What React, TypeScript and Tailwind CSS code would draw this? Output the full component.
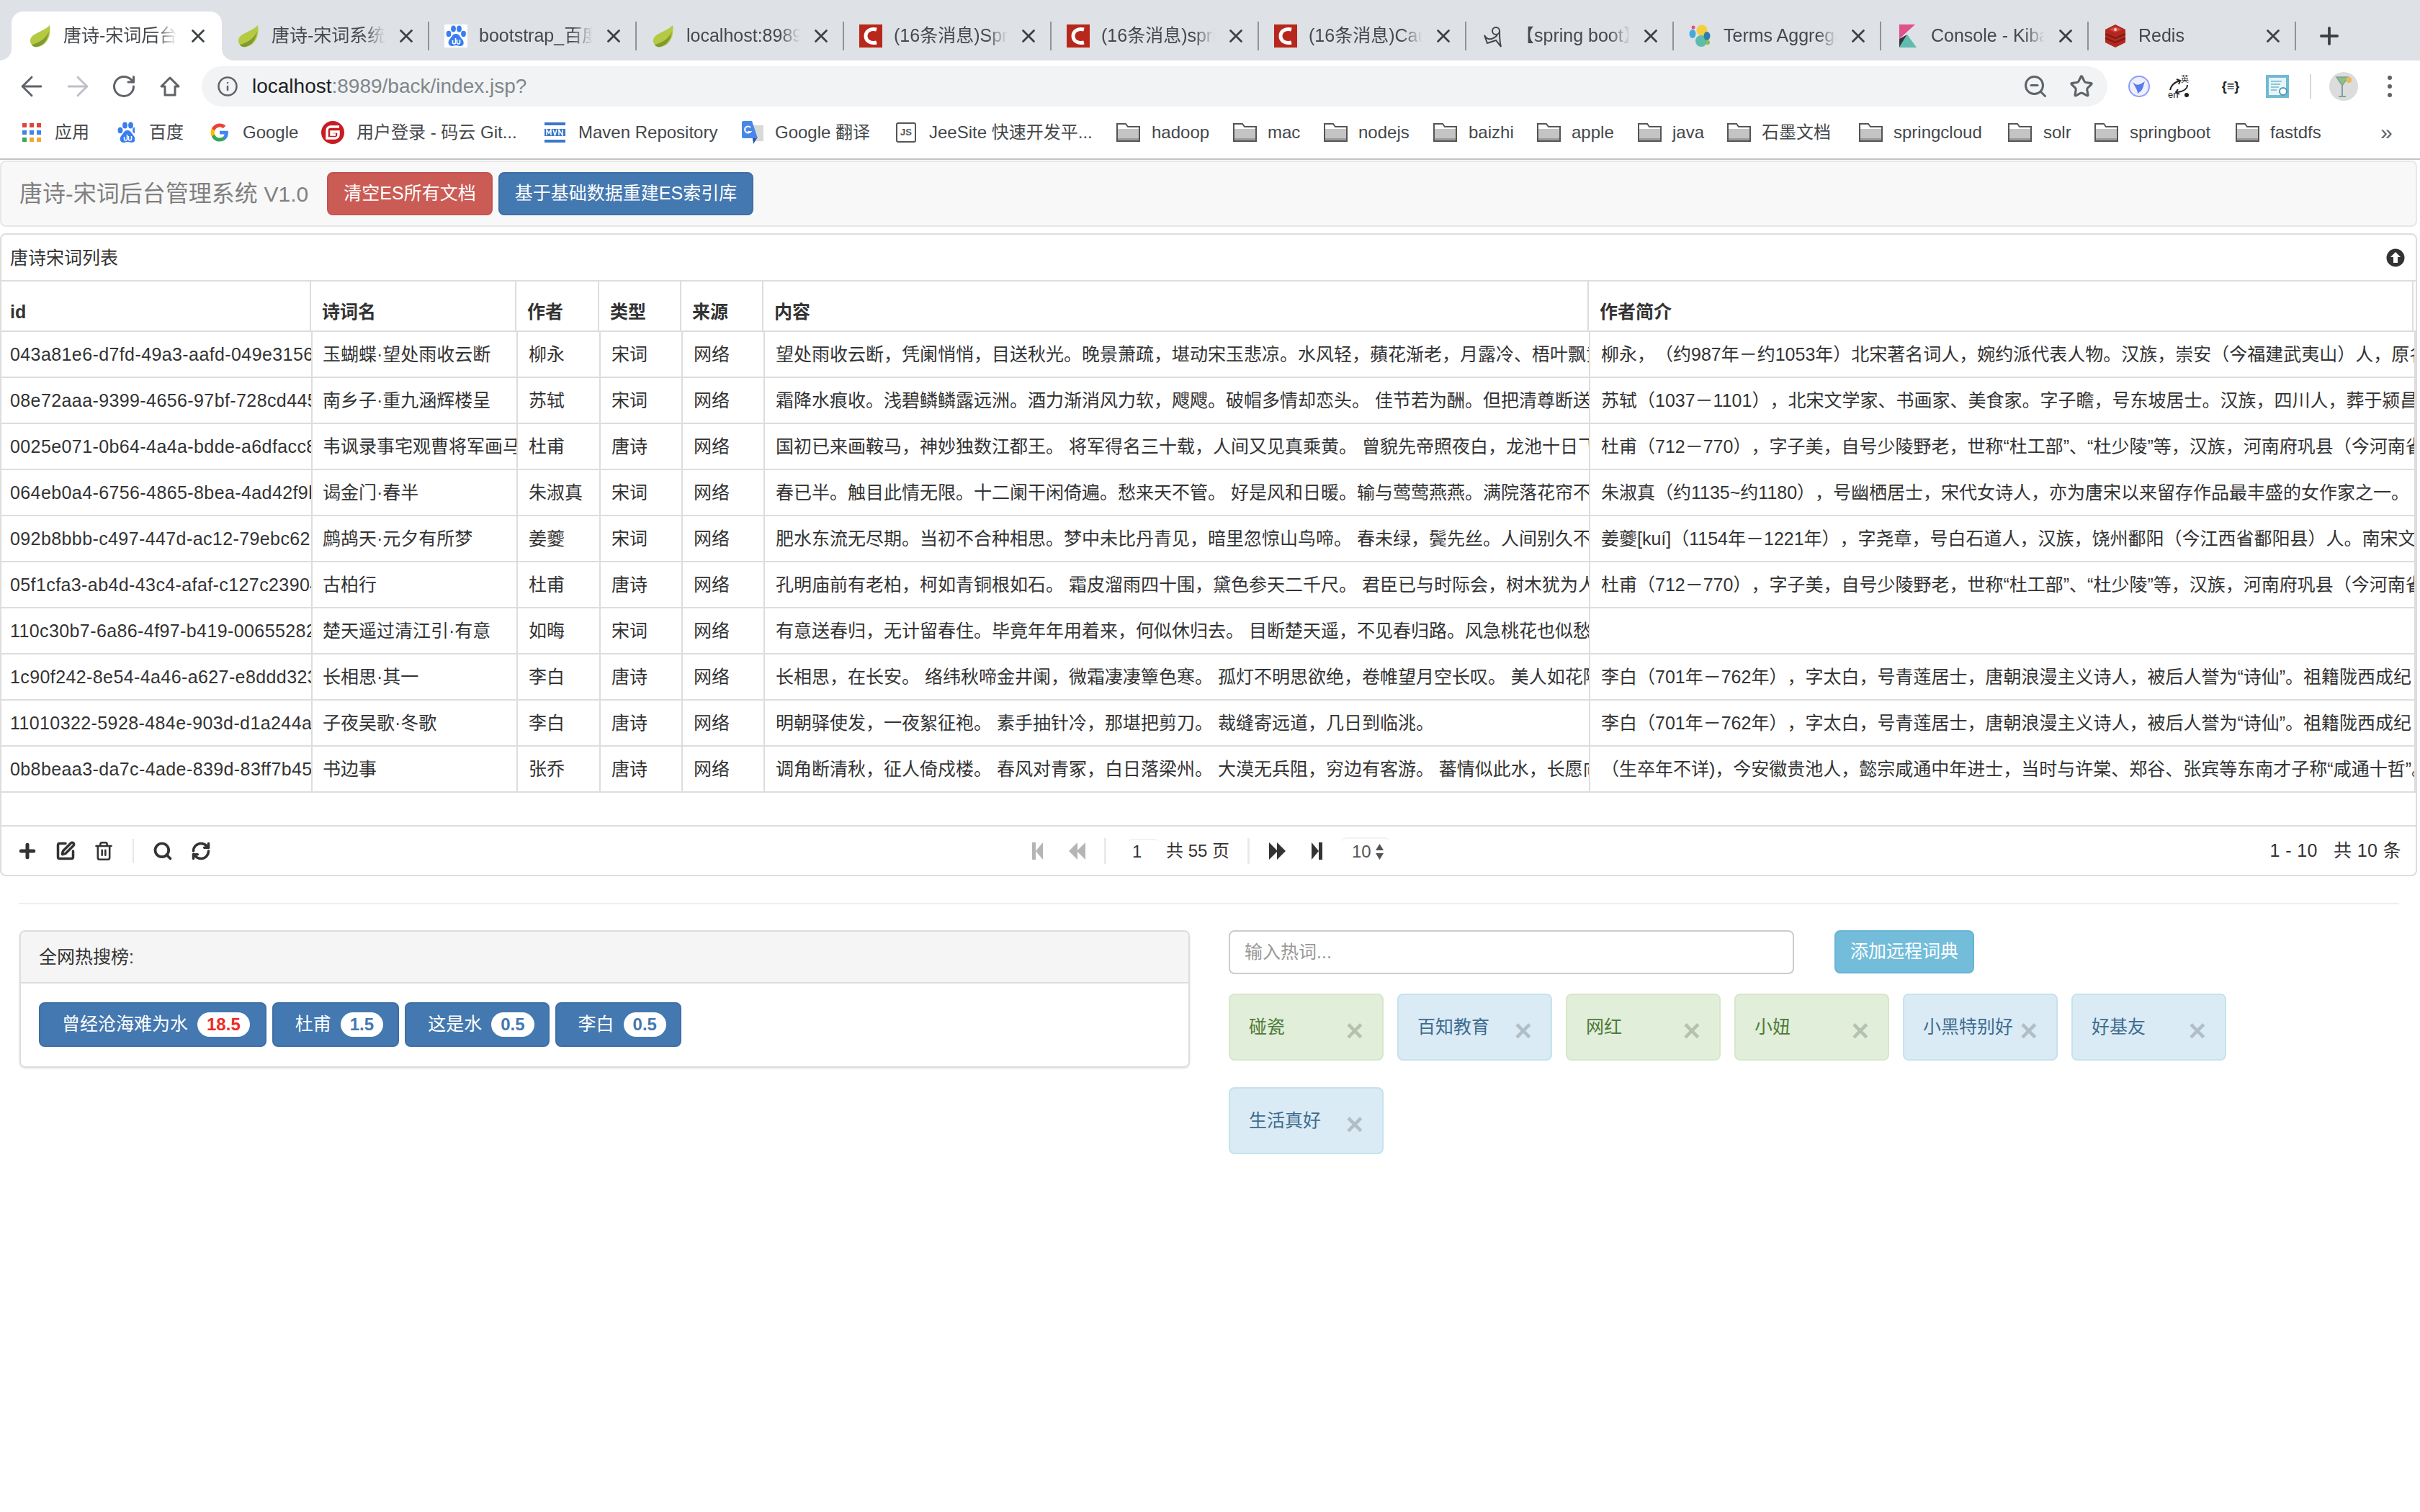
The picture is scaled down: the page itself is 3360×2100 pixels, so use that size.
import React from 'react'
import { ArrowLeft, ArrowRight, RotateCw, Info, ZoomOut, Star, X, Plus, SquarePen, Trash2, Search, RefreshCw } from 'lucide-react'

const Leaf = () => (
  <svg width="32" height="32" viewBox="0 0 32 32">
    <path d="M29 1C31 14 27 28 13 31C6 32 3 28 2 24C1 12 18 12 29 1Z" fill="#b5c943" />
    <path d="M4 28C12 26 22 22 28 10C26 22 20 29 12 31C8 32 5 30 4 28Z" fill="#7f9a2e" />
  </svg>
)

const Paw = ({ bg = true }: { bg?: boolean }) => (
  <svg width="32" height="32" viewBox="0 0 32 32">
    {bg && <rect width="32" height="32" fill="#fff" />}
    <ellipse cx="6" cy="13" rx="3.4" ry="4.2" fill="#3a7df0" />
    <ellipse cx="12.5" cy="6" rx="3.4" ry="4.6" fill="#3a7df0" />
    <ellipse cx="20.5" cy="6" rx="3.4" ry="4.6" fill="#3a7df0" />
    <ellipse cx="26.5" cy="13" rx="3.4" ry="4.2" fill="#3a7df0" />
    <path d="M16 13C11 13 10 18 7 21C4 25 6 30 11 30C13 30 14 29 16 29C18 29 20 30 22 30C27 30 28 25 25 21C22 18 21 13 16 13Z" fill="#3a7df0" />
    <path d="M11.5 22v3a2 2 0 0 0 4 0v-6M17.5 21v4a2 2 0 0 0 4 0v-4" fill="none" stroke="#fff" strokeWidth="1.6" />
  </svg>
)

const Csdn = () => (
  <svg width="32" height="32" viewBox="0 0 32 32">
    <rect width="32" height="32" fill="#b8271b" />
    <path d="M24 7C16 5 9 9 9 16C9 23 16 27 24 25" fill="none" stroke="#fff" strokeWidth="5" />
  </svg>
)

const Spiral = () => (
  <svg width="32" height="32" viewBox="0 0 32 32" fill="none" stroke="#444" strokeWidth="2">
    <circle cx="20" cy="9" r="5" />
    <path d="M25 9C25 16 25 24 27 31L20 22L8 26L4 15C8 22 14 22 22 15" />
  </svg>
)

const Elastic = () => (
  <svg width="32" height="32" viewBox="0 0 32 32">
    <circle cx="18" cy="8" r="7.5" fill="#f4ce3d" />
    <circle cx="17" cy="23" r="8" fill="#5cbcae" />
    <ellipse cx="5" cy="13" rx="4.5" ry="6" fill="#45a9dc" />
    <ellipse cx="25" cy="16" rx="4.5" ry="6" fill="#2e7fa8" />
    <circle cx="6" cy="4" r="2.5" fill="#e0508a" />
    <circle cx="26" cy="25" r="3" fill="#95bb3e" />
  </svg>
)

const Kibana = () => (
  <svg width="32" height="32" viewBox="0 0 32 32">
    <path d="M4 0H26L4 20Z" fill="#e0508a" />
    <path d="M4 20L15 14L4 32Z" fill="#343741" />
    <path d="M15 14L28 32H4Z" fill="#5fbcae" />
  </svg>
)

const Redis = () => (
  <svg width="32" height="32" viewBox="0 0 32 32">
    <path d="M16 0L30 7V25L16 32L2 25V7Z" fill="#b2281f" />
    <path d="M2 13L16 19L30 13M2 19L16 25L30 19" fill="none" stroke="#7d1a14" strokeWidth="2" />
    <path d="M16 3L25 7L16 11L7 7Z" fill="#d84a3c" />
    <circle cx="16" cy="7" r="2" fill="#f3d3cf" />
  </svg>
)

const tabs = [
  { title: '唐诗-宋词后台管理系统', icon: <Leaf /> },
  { title: '唐诗-宋词系统', icon: <Leaf /> },
  { title: 'bootstrap_百度搜索', icon: <Paw /> },
  { title: 'localhost:8989', icon: <Leaf /> },
  { title: '(16条消息)Spring Boot', icon: <Csdn /> },
  { title: '(16条消息)spring boot', icon: <Csdn /> },
  { title: '(16条消息)Caused by', icon: <Csdn /> },
  { title: '【spring boot】', icon: <Spiral /> },
  { title: 'Terms Aggregation', icon: <Elastic /> },
  { title: 'Console - Kibana', icon: <Kibana /> },
  { title: 'Redis', icon: <Redis /> },
]

const Folder = () => (
  <svg width="33" height="26" viewBox="0 0 33 26">
    <path d="M1 25V1H13L16 5H32V25Z" fill="#fff" stroke="#555" strokeWidth="2" />
    <rect x="2" y="8" width="29" height="13" fill="#c4c4c4" />
    <rect x="2" y="21" width="29" height="3" fill="#9c9c9c" />
  </svg>
)

const Apps = () => (
  <svg width="26" height="26" viewBox="0 0 26 26">
    <rect x="0" y="0" width="6" height="6" fill="#e0443a" />
    <rect x="10" y="0" width="6" height="6" fill="#e0443a" />
    <rect x="20" y="0" width="6" height="6" fill="#e0443a" />
    <rect x="0" y="10" width="6" height="6" fill="#3d84ee" />
    <rect x="10" y="10" width="6" height="6" fill="#3d84ee" />
    <rect x="20" y="10" width="6" height="6" fill="#3d84ee" />
    <rect x="0" y="20" width="6" height="6" fill="#3fa654" />
    <rect x="10" y="20" width="6" height="6" fill="#efa92f" />
    <rect x="20" y="20" width="6" height="6" fill="#efa92f" />
  </svg>
)

const GoogleG = () => (
  <svg width="26" height="28" viewBox="0 0 24 24">
    <path d="M23 12.3c0-.8-.1-1.6-.2-2.3H12v4.4h6.2a5.300 5.300 0 0 1-2.300 3.500v2.900h3.700c2.200-2 3.400-5 3.400-8.500z" fill="#4285f4" />
    <path d="M12 23.500c3.100 0 5.700-1 7.600-2.800l-3.700-2.900c-1 .7-2.300 1.100-3.900 1.100-3 0-5.500-2-6.400-4.700H1.800v3A11.500 11.500 0 0 0 12 23.500z" fill="#34a853" />
    <path d="M5.600 14.200a6.900 6.900 0 0 1 0-4.400v-3H1.800a11.500 11.500 0 0 0 0 10.400z" fill="#fbbc05" />
    <path d="M12 5.100c1.700 0 3.200.6 4.400 1.700l3.300-3.300A11.500 11.500 0 0 0 1.800 6.800l3.800 3c.9-2.700 3.400-4.700 6.400-4.700z" fill="#ea4335" />
  </svg>
)

const Gitee = () => (
  <svg width="32" height="32" viewBox="0 0 32 32">
    <circle cx="16" cy="16" r="16" fill="#c71d23" />
    <path d="M25 8H13A5 5 0 0 0 8 13V24H19A5 5 0 0 0 24 19V15H14V19H20" fill="none" stroke="#fff" strokeWidth="3.500" />
  </svg>
)

const Maven = () => (
  <svg width="29" height="28" viewBox="0 0 29 28">
    <rect width="29" height="4" y="0" fill="#3a78c9" />
    <rect width="29" height="4" y="24" fill="#3a78c9" />
    <rect width="29" height="10" y="9" fill="#3a78c9" />
    <path d="M3 18V10L6 15L9 10V18M12 10L14.500 18L17 10M20 18V10L25 18V10" fill="none" stroke="#fff" strokeWidth="1.500" />
  </svg>
)

const Translate = () => (
  <svg width="30" height="32" viewBox="0 0 30 32">
    <path d="M12 6H30V28H15Z" fill="#d9d9d9" />
    <path d="M0 2C0 1 1 0 2 0H14L22 24H2C1 24 0 23 0 22Z" fill="#4a86e8" />
    <path d="M15 24H21L16 32Z" fill="#2a56a8" />
    <path d="M14 9A4.500 4.500 0 1 0 14 15H10" fill="none" stroke="#fff" strokeWidth="2" transform="translate(-2 0)" />
  </svg>
)

const JsBox = () => (
  <div className="flex h-[28px] w-[28px] items-center justify-center rounded-[3px] border-2 border-[#555] text-[13px] font-bold leading-none text-[#555]">JS</div>
)

const bookmarks = [
  { label: '应用', icon: <Apps />, width: 'w-[130px]', box: 'w-[45px]' },
  { label: '百度', icon: <div className="h-[32px] w-[26px] overflow-hidden"><Paw bg={false} /></div>, width: 'w-[131px]', box: 'w-[46px]' },
  { label: 'Google', icon: <GoogleG />, width: 'w-[154px]', box: 'w-[45px]' },
  { label: '用户登录 - 码云 Git...', icon: <Gitee />, width: 'w-[310px]', box: 'w-[49px]' },
  { label: 'Maven Repository', icon: <Maven />, width: 'w-[274px]', box: 'w-[47px]' },
  { label: 'Google 翻译', icon: <Translate />, width: 'w-[214px]', box: 'w-[46px]' },
  { label: 'JeeSite 快速开发平...', icon: <JsBox />, width: 'w-[306px]', box: 'w-[46px]' },
  { label: 'hadoop', icon: <Folder />, width: 'w-[162px]', box: 'w-[49px]' },
  { label: 'mac', icon: <Folder />, width: 'w-[126px]', box: 'w-[48px]' },
  { label: 'nodejs', icon: <Folder />, width: 'w-[152px]', box: 'w-[48px]' },
  { label: 'baizhi', icon: <Folder />, width: 'w-[144px]', box: 'w-[49px]' },
  { label: 'apple', icon: <Folder />, width: 'w-[140px]', box: 'w-[48px]' },
  { label: 'java', icon: <Folder />, width: 'w-[124px]', box: 'w-[48px]' },
  { label: '石墨文档', icon: <Folder />, width: 'w-[183px]', box: 'w-[48px]' },
  { label: 'springcloud', icon: <Folder />, width: 'w-[207px]', box: 'w-[48px]' },
  { label: 'solr', icon: <Folder />, width: 'w-[120px]', box: 'w-[49px]' },
  { label: 'springboot', icon: <Folder />, width: 'w-[196px]', box: 'w-[49px]' },
  { label: 'fastdfs', icon: <Folder />, width: 'w-[201px]', box: 'w-[48px]' },
]

const duFu = '杜甫（712－770），字子美，自号少陵野老，世称“杜工部”、“杜少陵”等，汉族，河南府巩县（今河南省巩义市）人'
const liBai = '李白（701年－762年），字太白，号青莲居士，唐朝浪漫主义诗人，被后人誉为“诗仙”。祖籍陇西成纪'

const rows = [
  ['043a81e6-d7fd-49a3-aafd-049e31560a1b', '玉蝴蝶·望处雨收云断', '柳永', '宋词', '望处雨收云断，凭阑悄悄，目送秋光。晚景萧疏，堪动宋玉悲凉。水风轻，蘋花渐老，月露冷、梧叶飘黄。', '柳永，（约987年－约1053年）北宋著名词人，婉约派代表人物。汉族，崇安（今福建武夷山）人，原名三变'],
  ['08e72aaa-9399-4656-97bf-728cd4453c21', '南乡子·重九涵辉楼呈', '苏轼', '宋词', '霜降水痕收。浅碧鳞鳞露远洲。酒力渐消风力软，飕飕。破帽多情却恋头。 佳节若为酬。但把清尊断送秋。', '苏轼（1037－1101），北宋文学家、书画家、美食家。字子瞻，号东坡居士。汉族，四川人，葬于颍昌。'],
  ['0025e071-0b64-4a4a-bdde-a6dfacc80e11', '韦讽录事宅观曹将军画马图', '杜甫', '唐诗', '国初已来画鞍马，神妙独数江都王。 将军得名三十载，人间又见真乘黄。 曾貌先帝照夜白，龙池十日飞霹雳。', duFu],
  ['064eb0a4-6756-4865-8bea-4ad42f9b07d2', '谒金门·春半', '朱淑真', '宋词', '春已半。触目此情无限。十二阑干闲倚遍。愁来天不管。 好是风和日暖。输与莺莺燕燕。满院落花帘不卷。', '朱淑真（约1135~约1180），号幽栖居士，宋代女诗人，亦为唐宋以来留存作品最丰盛的女作家之一。'],
  ['092b8bbb-c497-447d-ac12-79ebc6215f30', '鹧鸪天·元夕有所梦', '姜夔', '宋词', '肥水东流无尽期。当初不合种相思。梦中未比丹青见，暗里忽惊山鸟啼。 春未绿，鬓先丝。人间别久不成悲。', '姜夔[kuí]（1154年－1221年），字尧章，号白石道人，汉族，饶州鄱阳（今江西省鄱阳县）人。南宋文学家'],
  ['05f1cfa3-ab4d-43c4-afaf-c127c23904e8', '古柏行', '杜甫', '唐诗', '孔明庙前有老柏，柯如青铜根如石。 霜皮溜雨四十围，黛色参天二千尺。 君臣已与时际会，树木犹为人爱惜。', duFu],
  ['110c30b7-6a86-4f97-b419-00655282d6a4', '楚天遥过清江引·有意', '如晦', '宋词', '有意送春归，无计留春住。毕竟年年用着来，何似休归去。 目断楚天遥，不见春归路。风急桃花也似愁，', ''],
  ['1c90f242-8e54-4a46-a627-e8ddd3231b97', '长相思·其一', '李白', '唐诗', '长相思，在长安。 络纬秋啼金井阑，微霜凄凄簟色寒。 孤灯不明思欲绝，卷帷望月空长叹。 美人如花隔云端。', liBai],
  ['11010322-5928-484e-903d-d1a244a6c7f0', '子夜吴歌·冬歌', '李白', '唐诗', '明朝驿使发，一夜絮征袍。 素手抽针冷，那堪把剪刀。 裁缝寄远道，几日到临洮。', liBai],
  ['0b8beaa3-da7c-4ade-839d-83ff7b4592ce', '书边事', '张乔', '唐诗', '调角断清秋，征人倚戍楼。 春风对青冢，白日落梁州。 大漠无兵阻，穷边有客游。 蕃情似此水，长愿向南流。', '（生卒年不详)，今安徽贵池人，懿宗咸通中年进士，当时与许棠、郑谷、张宾等东南才子称“咸通十哲”。'],
]

const headers = ['id', '诗词名', '作者', '类型', '来源', '内容', '作者简介']

const hot = [
  { label: '曾经沧海难为水', score: '18.5', color: 'text-[#ee2a1e]', pad: 'pr-[21px]' },
  { label: '杜甫', score: '1.5', color: 'text-[#4478b0]', pad: 'pr-[20px]' },
  { label: '这是水', score: '0.5', color: 'text-[#4478b0]', pad: 'pr-[19px]' },
  { label: '李白', score: '0.5', color: 'text-[#4478b0]', pad: 'pr-[19px]' },
]

const tags = [
  { label: '碰瓷', green: true },
  { label: '百知教育', green: false },
  { label: '网红', green: true },
  { label: '小妞', green: true },
  { label: '小黑特别好', green: false },
  { label: '好基友', green: false },
  { label: '生活真好', green: false },
]

export default function App() {
  return (
    <div className="min-h-screen w-[3360px] overflow-hidden bg-white font-['Liberation_Sans','Noto_Sans_CJK_SC',sans-serif] text-[25px] text-[#333] [text-spacing-trim:space-all]">
      {/* 浏览器标签栏 */}
      <div className="flex h-[84px] items-end bg-[#dee1e6] pl-[16px]">
        {tabs.map((tab, i) => (
          <div
            key={tab.title}
            className={`relative flex h-[68px] items-center text-[25px] text-[#45484c] ${i === 0 ? 'w-[292px] rounded-t-[16px] bg-white pl-[24px]' : 'w-[288px] pl-[21px]'}`}
          >
            {i === 0 && (
              <>
                <span className="absolute bottom-0 left-[-16px] h-[16px] w-[16px] bg-[radial-gradient(circle_at_0_0,#dee1e6_15.500px,white_16px)]" />
                <span className="absolute bottom-0 right-[-16px] h-[16px] w-[16px] bg-[radial-gradient(circle_at_100%_0,#dee1e6_15.500px,white_16px)]" />
              </>
            )}
            <div className="w-[48px] shrink-0">{tab.icon}</div>
            <div className="w-[158px] shrink-0 overflow-hidden whitespace-nowrap [mask-image:linear-gradient(to_right,black_82%,transparent)]">{tab.title}</div>
            <div className="ml-[14px] flex w-[30px] shrink-0 justify-center">
              <X size={30} strokeWidth={2.2} className="text-[#3c4043]" />
            </div>
            {i > 0 && <div className="ml-auto h-[40px] w-[2px] bg-[#8f9398]" />}
          </div>
        ))}
        <div className="ml-[27px] flex h-[68px] items-center">
          <Plus size={38} strokeWidth={2.4} className="text-[#3c4043]" />
        </div>
      </div>

      {/* 地址栏 */}
      <div className="flex h-[72px] items-center pl-[12px]">
        <div className="flex w-[64px] justify-center"><ArrowLeft size={44} strokeWidth={1.6} className="text-[#5f6368]" /></div>
        <div className="flex w-[64px] justify-center"><ArrowRight size={44} strokeWidth={1.6} className="text-[#bdc1c6]" /></div>
        <div className="flex w-[64px] justify-center"><RotateCw size={36} strokeWidth={2} className="text-[#5f6368]" /></div>
        <div className="flex w-[64px] justify-center">
          <svg width="30" height="30" viewBox="0 0 30 30" fill="none" stroke="#5f6368" strokeWidth="3">
            <path d="M15 3L3 15H8V27H22V15H27Z" strokeLinejoin="round" />
          </svg>
        </div>
        <div className="ml-[12px] flex h-[56px] w-[2646px] items-center rounded-full bg-[#f1f3f4] pl-[21px] pr-[4px]">
          <Info size={30} strokeWidth={2} className="text-[#5f6368]" />
          <div className="ml-[19px] text-[28px] text-[#80868b]"><span className="text-[#202124]">localhost</span>:8989/back/index.jsp?</div>
          <div className="ml-auto flex w-[64px] justify-center"><ZoomOut size={36} strokeWidth={2} className="text-[#5f6368]" /></div>
          <div className="flex w-[64px] justify-center"><Star size={34} strokeWidth={2.2} className="text-[#5f6368]" /></div>
        </div>
        <div className="ml-[16px] flex w-[56px] justify-center">
          <svg width="30" height="30" viewBox="0 0 30 30">
            <circle cx="15" cy="15" r="14" fill="#eef0ff" stroke="#8f9cf5" strokeWidth="2" />
            <path d="M6 9C11 14 15 14 23 8C21 13 21 17 18 21L13 25C13 20 9 15 6 9Z" fill="#5a7bea" />
          </svg>
        </div>
        <div className="flex w-[56px] justify-center">
          <svg width="32" height="32" viewBox="0 0 32 32" fill="none" stroke="#222" strokeWidth="2">
            <path d="M3 21C4 15 8 11 16 8M12 6L17 8L15 13M27 14C27 19 22 23 13 24M16 27L11 24L14 20" />
            <text x="18" y="10" fontSize="11" fill="#222" stroke="none">英</text>
            <text x="0" y="32" fontSize="13" fill="#222" stroke="none">en</text>
            <circle cx="26" cy="28" r="3" fill="#222" stroke="none" />
          </svg>
        </div>
        <div className="ml-[15px] flex w-[56px] justify-center text-[18px] font-bold leading-none text-[#222]">{'{≡}'}</div>
        <div className="ml-[9px] flex w-[56px] justify-center">
          <svg width="32" height="32" viewBox="0 0 32 32">
            <rect width="32" height="32" fill="#6fbcd1" />
            <rect x="4" y="4" width="24" height="24" fill="#e8f3f7" />
            <path d="M7 9H22M7 13H20M7 17H18M7 21H15" stroke="#6fbcd1" strokeWidth="1.500" />
            <circle cx="24" cy="23" r="5" fill="#fff" stroke="#4d9ab2" strokeWidth="2" />
          </svg>
        </div>
        <div className="ml-[17px] h-[34px] w-[2px] bg-[#d5d7da]" />
        <div className="ml-[25px] flex h-[40px] w-[40px] items-center justify-center rounded-full bg-[#dcdcdc]">
          <svg width="24" height="34" viewBox="0 0 24 34" fill="none">
            <path d="M2 4H18L10 16Z" fill="#8fbf7a" stroke="#7da0a8" strokeWidth="1.500" />
            <path d="M10 16V30M5 31H15" stroke="#7da0a8" strokeWidth="2" />
            <circle cx="19" cy="8" r="4" fill="#e8b85a" />
          </svg>
        </div>
        <div className="ml-[30px] flex w-[28px] flex-col items-center gap-[6px]">
          <span className="h-[6px] w-[6px] rounded-full bg-[#5f6368]" />
          <span className="h-[6px] w-[6px] rounded-full bg-[#5f6368]" />
          <span className="h-[6px] w-[6px] rounded-full bg-[#5f6368]" />
        </div>
      </div>

      {/* 书签栏 */}
      <div className="flex h-[66px] items-center border-b-2 border-[#c4c4c4] pb-[9px] pl-[31px] text-[24px] text-[#45484c]">
        {bookmarks.map(b => (
          <div key={b.label} className={`flex shrink-0 items-center ${b.width}`}>
            <div className={`shrink-0 ${b.box}`}>{b.icon}</div>
            <span className="whitespace-nowrap">{b.label}</span>
          </div>
        ))}
        <span className="text-[30px] leading-none text-[#5f6368]">»</span>
      </div>

      {/* 导航条 */}
      <div className="mr-[4px] mt-[1px] flex h-[92px] items-center rounded-lg border-2 border-[#e7e7e7] bg-[#f8f8f8] pl-[25px]">
        <div className="w-[402px] whitespace-nowrap text-[32px] text-[#808080]">唐诗-宋词后台管理系统 <span className="text-[30px]">V1.0</span></div>
        <button className="ml-[25px] h-[60px] w-[230px] rounded-lg border-2 border-[#c4534c] bg-[#cb5c55] text-white">清空ES所有文档</button>
        <button className="ml-[8px] h-[60px] w-[354px] rounded-lg border-2 border-[#3f6fa5] bg-[#4478b0] text-white">基于基础数据重建ES索引库</button>
      </div>

      {/* 列表面板 */}
      <div className="mr-[4px] mt-[9px] rounded-lg border-2 border-[#ddd]">
        <div className="flex h-[65px] items-center justify-between border-b-2 border-[#ddd] pl-[12px] pr-[15px]">
          <span className="pt-[2px]">唐诗宋词列表</span>
          <svg width="26" height="26" viewBox="0 0 26 26">
            <circle cx="13" cy="13" r="12.500" fill="#333" />
            <path d="M13 5L20 12H16V20H10V12H6Z" fill="#fff" />
          </svg>
        </div>
        <div className="grid h-[70px] grid-cols-[430px_285px_115px_114px_114px_1146px_1145px] border-b-2 border-[#ddd] font-bold">
          {headers.map((h, i) => (
            <div key={h} className={`flex items-center border-r-2 border-[#ddd] pt-[18px] ${i === 0 ? 'pl-[12px]' : 'pl-[15px]'}`}>{h}</div>
          ))}
        </div>
        <div className="mb-[45px]">
          {rows.map(row => (
            <div key={row[0]} className="grid h-[64px] grid-cols-[432px_285px_115px_114px_114px_1146px_1146px] border-b-2 border-[#ddd]">
              <div className="flex items-center overflow-hidden whitespace-nowrap border-r-2 border-[#ddd] pl-[12px] pt-[2px] tracking-[0.4px]">{row[0]}</div>
              <div className="flex items-center overflow-hidden whitespace-nowrap border-r-2 border-[#ddd] pl-[14px] pt-[2px]">{row[1]}</div>
              <div className="flex items-center overflow-hidden whitespace-nowrap border-r-2 border-[#ddd] pl-[15px] pt-[2px]">{row[2]}</div>
              <div className="flex items-center overflow-hidden whitespace-nowrap border-r-2 border-[#ddd] pl-[15px] pt-[2px]">{row[3]}</div>
              <div className="flex items-center overflow-hidden whitespace-nowrap border-r-2 border-[#ddd] pl-[15px] pt-[2px]">网络</div>
              <div className="flex items-center overflow-hidden whitespace-nowrap border-r-2 border-[#ddd] pl-[15px] pt-[2px]">{row[4]}</div>
              <div className="flex items-center overflow-hidden whitespace-nowrap border-r-2 border-[#ddd] pl-[15px] pt-[2px]">{row[5]}</div>
            </div>
          ))}
        </div>

        {/* 工具栏和分页 */}
        <div className="flex h-[69px] items-center border-t-2 border-[#ddd]">
          <div className="flex w-[1431px] shrink-0 items-center gap-[27px] pl-[23px] text-[#333]">
            <Plus size={30} strokeWidth={4} className="-mx-[2px]" />
            <SquarePen size={28} strokeWidth={3} className="-mx-[1px]" />
            <Trash2 size={28} strokeWidth={2.2} className="-mx-[1px]" />
            <div className="h-[34px] w-[2px] bg-[#e7e7e7]" />
            <Search size={28} strokeWidth={3.2} className="-mx-[1px]" />
            <RefreshCw size={28} strokeWidth={3} className="-mx-[1px]" />
          </div>
          <svg width="15" height="24" viewBox="0 0 15 24" fill="#b5b5b5" className="shrink-0">
            <rect width="5" height="24" />
            <path d="M15 0V24L5 12Z" />
          </svg>
          <svg width="23" height="24" viewBox="0 0 23 24" fill="#b5b5b5" className="ml-[36px] shrink-0">
            <path d="M12 0V24L0 12Z" />
            <path d="M23 0V24L11 12Z" />
          </svg>
          <div className="ml-[26px] h-[36px] w-[3px] bg-[#eaeaea]" />
          <div className="ml-[30px] flex h-[34px] w-[43px] items-center rounded-t-md border-t-2 border-[#f2f2f2] pl-[6px] text-[24px] leading-none">1</div>
          <span className="ml-[10px] w-[91px] whitespace-nowrap text-[24px]">共 55 页</span>
          <div className="ml-[22px] h-[36px] w-[3px] bg-[#eaeaea]" />
          <svg width="23" height="24" viewBox="0 0 23 24" fill="#333" className="ml-[27px] shrink-0">
            <path d="M0 0V24L12 12Z" />
            <path d="M11 0V24L23 12Z" />
          </svg>
          <svg width="15" height="24" viewBox="0 0 15 24" fill="#333" className="ml-[36px] shrink-0">
            <path d="M0 0V24L10 12Z" />
            <rect x="10" width="5" height="24" />
          </svg>
          <div className="ml-[26px] flex h-[38px] w-[68px] items-center gap-[6px] rounded-t-lg border-t-2 border-[#f2f2f2] pl-[15px] text-[24px] leading-none text-[#555]">
            10
            <svg width="11" height="22" viewBox="0 0 11 22" fill="#555">
              <path d="M5.500 0L11 9H0Z" />
              <path d="M0 13H11L5.500 22Z" />
            </svg>
          </div>
          <div className="ml-auto whitespace-pre pr-[20px] tracking-[0.4px]">1 - 10   共 10 条</div>
        </div>
      </div>

      <div className="ml-[26px] mt-[37px] h-[2px] w-[3305px] bg-[#eee]" />

      <div className="mt-[36px] flex items-start pl-[27px]">
        {/* 全网热搜榜 */}
        <div className="h-[191px] w-[1625px] shrink-0 rounded-lg border-2 border-[#ddd] shadow-sm">
          <div className="flex h-[72px] items-center rounded-t-lg border-b-2 border-[#ddd] bg-[#f5f5f5] pl-[25px] pt-[1px]">全网热搜榜:</div>
          <div className="flex gap-[8px] pl-[25px] pt-[26px]">
            {hot.map(h => (
              <button key={h.label} className={`flex h-[62px] items-center gap-[13px] rounded-lg border-2 border-[#3f6fa5] bg-[#4478b0] pl-[30px] text-white ${h.pad}`}>
                {h.label}
                <span className={`flex h-[34px] items-center rounded-[20px] bg-white px-[13px] text-[24px] font-bold ${h.color}`}>{h.score}</span>
              </button>
            ))}
          </div>
        </div>

        {/* 远程词典 */}
        <div className="ml-[54px] w-[1420px] shrink-0">
          <div className="flex items-start">
            <input placeholder="输入热词..." className="h-[61px] w-[785px] rounded-lg border-2 border-[#ccc] pl-[20px] outline-none placeholder:text-[#999]" />
            <button className="ml-[56px] h-[60px] w-[194px] rounded-lg border-2 border-[#66b4d6] bg-[#73bddb] text-white">添加远程词典</button>
          </div>
          <div className="mt-[27px] flex flex-wrap gap-x-[19px] gap-y-[37px]">
            {tags.map(t => (
              <div
                key={t.label}
                className={`flex h-[93px] w-[215px] items-center justify-between rounded-lg border-2 pl-[26px] pr-[26px] ${t.green ? 'border-[#d9e6c8] bg-[#e1eed9] text-[#4f7a3a]' : 'border-[#c4e3ec] bg-[#dbebf5] text-[#3e6c8f]'}`}
              >
                <span className="whitespace-nowrap">{t.label}</span>
                <span className="mt-[10px] text-[42px] font-bold leading-none text-black/20">×</span>
              </div>
            ))}
          </div>
        </div>
      </div>
    </div>
  )
}
